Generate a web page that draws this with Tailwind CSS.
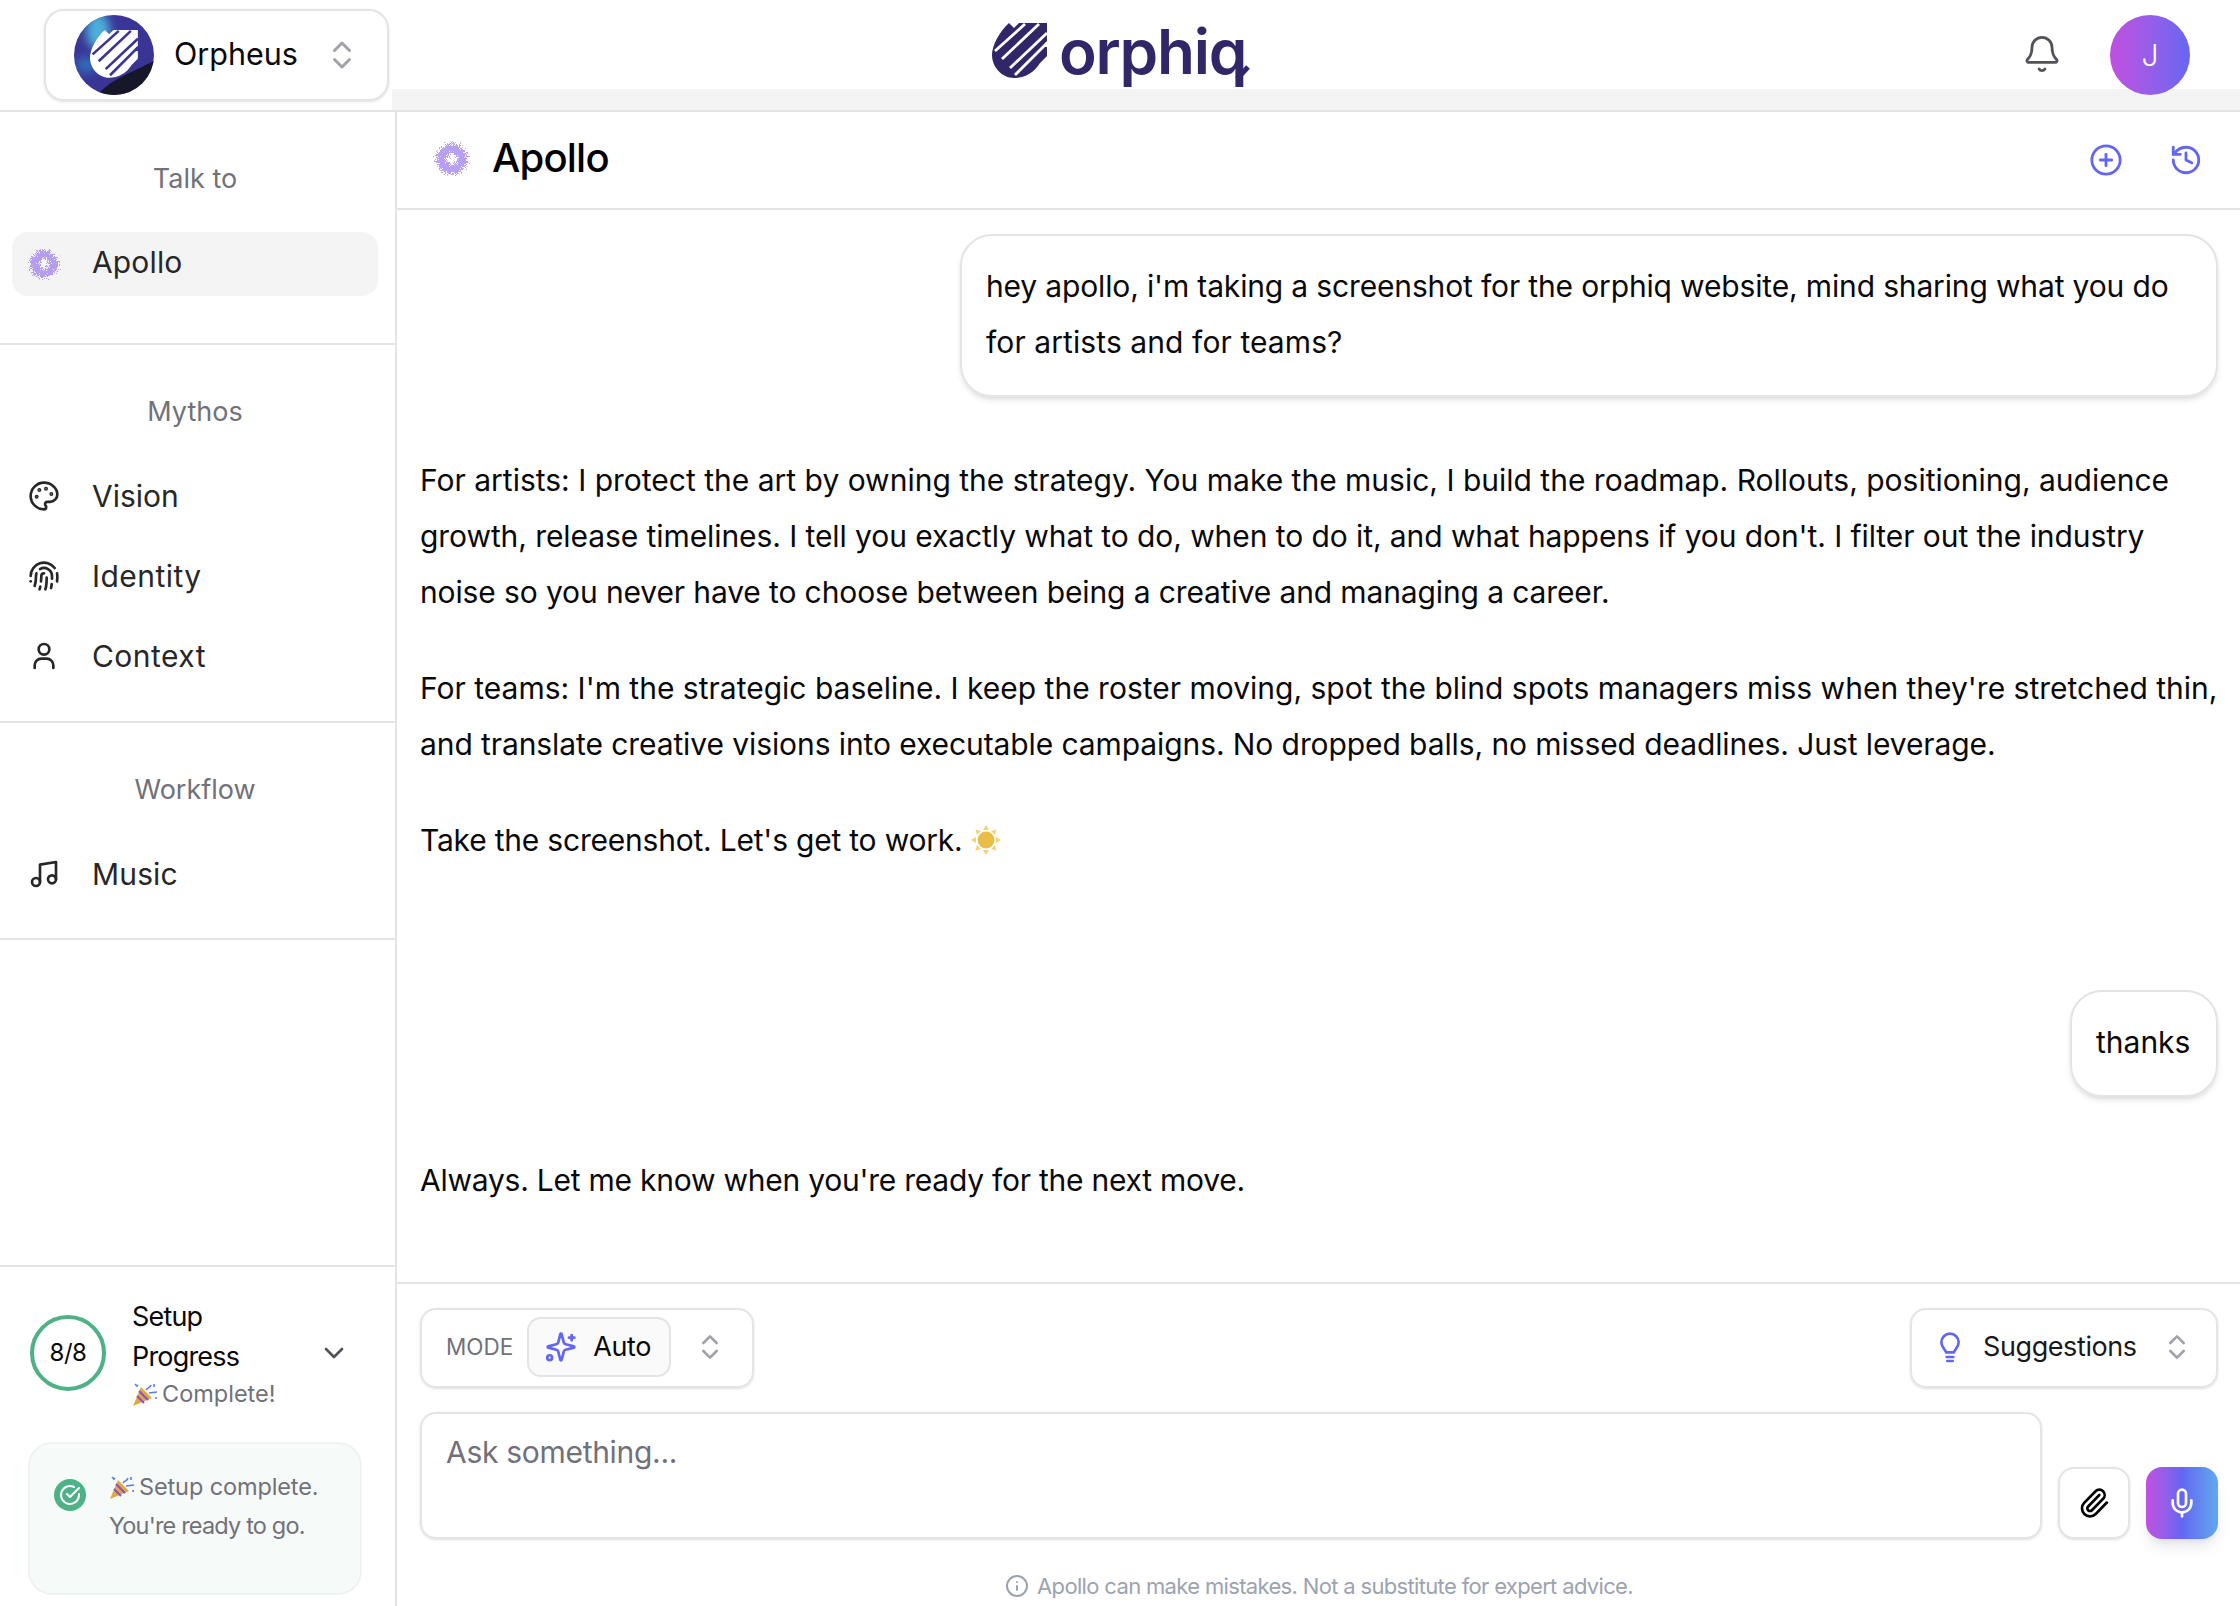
<!doctype html>
<html><head><meta charset="utf-8"><title>Orphiq</title>
<script src="https://cdn.jsdelivr.net/npm/@tailwindcss/browser@4"></script></head>
<body class="bg-white">
<div class="flex h-[1606px] w-[2240px] flex-col overflow-hidden bg-white font-['Inter','Liberation_Sans',sans-serif] text-[30px] text-[#09090b]">
  <!-- top bar -->
  <header class="flex h-[112px] shrink-0 border-b-2 border-[#e4e4e7]">
    <div class="w-[392px] shrink-0 pl-[44px] pt-[9px]">
      <div class="flex h-[92px] w-[345px] items-center rounded-[20px] border-2 border-[#e4e4e7] pl-[28px] shadow-sm">
        <svg class="h-[80px] w-[80px] shrink-0" viewBox="0 0 80 80">
          <defs>
            <clipPath id="avclip"><circle cx="40" cy="40" r="40"/></clipPath>
            <filter id="blurav" x="-50%" y="-50%" width="200%" height="200%"><feGaussianBlur stdDeviation="5"/></filter>
          </defs>
          <g clip-path="url(#avclip)">
            <rect width="80" height="80" fill="#3a3595"/>
            <ellipse cx="24" cy="16" rx="12" ry="18" fill="#4bb0dc" filter="url(#blurav)"/>
            <ellipse cx="12" cy="50" rx="10" ry="8" fill="#2f6fc0" filter="url(#blurav)"/>
            <path d="M24 80C34 66 56 58 80 46V80z" fill="#17172a"/>
          </g>
          <g transform="translate(16 15) scale(.87)">
            <path fill="#fff" d="M17 0l5 5 5-5H55V18L50 24 55 24V33L48 40C42 50 32 55 22 55 10 55 0 44 0 32 0 22 8 8 17 0Z"/>
            <path stroke="#3a3595" stroke-width="3" d="M3 28 33 1M10 36 47 1M18 45 55 10M23 52 55 20"/>
          </g>
        </svg>
        <span class="ml-[20px] mt-[-2px] text-[30.5px] text-[#09090b]">Orpheus</span>
        <svg class="ml-[26px] h-[36px] w-[36px] text-[#a1a1aa]" viewBox="0 0 24 24" fill="none" stroke="currentColor" stroke-width="2" stroke-linecap="round" stroke-linejoin="round"><path d="m7 15 5 5 5-5"/><path d="m7 9 5-5 5 5"/></svg>
      </div>
    </div>
    <div class="flex min-w-0 flex-1 flex-col">
      <div class="relative flex h-[89px] items-start bg-white">
        <div class="ml-[600px] flex items-start pt-[23px]">
          <svg class="h-[55px] w-[55px]" viewBox="0 0 55 55">
            <path fill="#312768" d="M17 0l5 5 5-5H55V18L50 24 55 24V33L48 40C42 50 32 55 22 55 10 55 0 44 0 32 0 22 8 8 17 0Z"/>
            <path stroke="#fff" stroke-width="2.800" d="M3 28 33 1M10 36 47 1M18 45 55 10M23 52 55 20"/>
          </svg>
          <span class="ml-[12px] mt-[-7px] text-[62px] leading-[72px] font-semibold tracking-[-0.02em] text-[#312768]">orphiq</span>
          <svg class="ml-[-16px] mt-[39px] h-[28px] w-[22px]" viewBox="0 0 22 28" fill="none"><path d="M7 17 18 5" stroke="#312768" stroke-width="5"/></svg>
        </div>
        <svg class="ml-auto mr-[48px] mt-[34px] h-[40px] w-[40px] text-[#52525b]" viewBox="0 0 24 24" fill="none" stroke="currentColor" stroke-width="1.7" stroke-linecap="round" stroke-linejoin="round"><path d="M10.268 21a2 2 0 0 0 3.464 0"/><path d="M3.262 15.326A1 1 0 0 0 4 17h16a1 1 0 0 0 .74-1.673C19.41 13.956 18 12.499 18 8A6 6 0 0 0 6 8c0 4.499-1.411 5.956-2.738 7.326"/></svg>
        <div class="relative z-10 mr-[50px] mt-[15px] flex h-[80px] w-[80px] items-center justify-center rounded-full bg-gradient-to-r from-[#c04fe0] to-[#6366f1] text-[30px] font-light text-white">J</div>
      </div>
      <div class="h-[21px] bg-[#f4f4f5]"></div>
    </div>
  </header>

  <div class="flex min-h-0 flex-1">
    <!-- sidebar -->
    <aside class="flex w-[397px] shrink-0 flex-col border-r-2 border-[#e4e4e7] text-[#27272a]">
      <section class="h-[233px] border-b-2 border-[#e4e4e7] pl-[12px] pr-[17px]">
        <h3 class="mt-[49px] text-center text-[27px] leading-[36px] text-[#71717a]">Talk to</h3>
        <div class="mt-[35px] flex h-[64px] w-[366px] items-center rounded-[16px] bg-[#f4f4f5] pl-[10px]">
          <svg class="h-[44px] w-[44px] opacity-75" viewBox="0 0 44 44"><defs><filter id="fz1" x="-60%" y="-60%" width="220%" height="220%" color-interpolation-filters="sRGB"><feTurbulence type="fractalNoise" baseFrequency="1.3" numOctaves="2" seed="4" result="n"/><feDisplacementMap in="SourceGraphic" in2="n" scale="14" xChannelSelector="R" yChannelSelector="G"/></filter></defs><circle cx="22" cy="22" r="9.500" fill="none" stroke="#9f7ff0" stroke-width="9" filter="url(#fz1)"/></svg>
          <span class="ml-[26px] mt-[-4px] tracking-[0.005em]">Apollo</span>
        </div>
      </section>
      <section class="h-[378px] border-b-2 border-[#e4e4e7] pl-[12px] pr-[17px]">
        <h3 class="mt-[49px] text-center text-[27px] leading-[36px] text-[#71717a]">Mythos</h3>
        <div class="mt-[42px] flex flex-col gap-[32px] pl-[16px]">
          <div class="flex h-[48px] items-center"><svg class="h-[32px] w-[32px]" viewBox="0 0 24 24" fill="none" stroke="currentColor" stroke-width="2" stroke-linecap="round" stroke-linejoin="round"><circle cx="13.5" cy="6.5" r=".5" fill="currentColor"/><circle cx="17.5" cy="10.5" r=".5" fill="currentColor"/><circle cx="8.5" cy="7.5" r=".5" fill="currentColor"/><circle cx="6.5" cy="12.5" r=".5" fill="currentColor"/><path d="M12 2C6.5 2 2 6.5 2 12s4.5 10 10 10c.926 0 1.648-.746 1.648-1.688 0-.437-.18-.835-.437-1.125-.29-.289-.438-.652-.438-1.125a1.64 1.64 0 0 1 1.668-1.668h1.996c3.051 0 5.555-2.503 5.555-5.554C21.965 6.012 17.461 2 12 2z"/></svg><span class="ml-[32px]">Vision</span></div>
          <div class="flex h-[48px] items-center"><svg class="h-[32px] w-[32px]" viewBox="0 0 24 24" fill="none" stroke="currentColor" stroke-width="2" stroke-linecap="round" stroke-linejoin="round"><path d="M12 10a2 2 0 0 0-2 2c0 1.02-.1 2.51-.26 4"/><path d="M14 13.12c0 2.38 0 6.38-1 8.88"/><path d="M17.29 21.02c.12-.6.43-2.3.5-3.02"/><path d="M2 12a10 10 0 0 1 18-6"/><path d="M2 16h.01"/><path d="M21.8 16c.2-2 .131-5.354 0-6"/><path d="M5 19.5C5.5 18 6 15 6 12a6 6 0 0 1 .34-2"/><path d="M8.65 22c.21-.66.45-1.32.57-2"/><path d="M9 6.8a6 6 0 0 1 9 5.2v2"/></svg><span class="ml-[32px] tracking-[0.015em]">Identity</span></div>
          <div class="flex h-[48px] items-center"><svg class="h-[32px] w-[32px]" viewBox="0 0 24 24" fill="none" stroke="currentColor" stroke-width="2" stroke-linecap="round" stroke-linejoin="round"><circle cx="12" cy="7" r="4"/><path d="M5 21v-2a5 5 0 0 1 5-5h4a5 5 0 0 1 5 5v2"/></svg><span class="ml-[32px] tracking-[0.015em]">Context</span></div>
        </div>
      </section>
      <section class="h-[217px] border-b-2 border-[#e4e4e7] pl-[12px] pr-[17px]">
        <h3 class="mt-[49px] text-center text-[27px] leading-[36px] text-[#71717a]">Workflow</h3>
        <div class="mt-[42px] flex h-[48px] items-center pl-[16px]"><svg class="h-[32px] w-[32px]" viewBox="0 0 24 24" fill="none" stroke="currentColor" stroke-width="2" stroke-linecap="round" stroke-linejoin="round"><path d="M9 18V5l12-2v13"/><circle cx="6" cy="18" r="3"/><circle cx="18" cy="16" r="3"/></svg><span class="ml-[32px] tracking-[0.005em]">Music</span></div>
      </section>
      <div class="flex-1"></div>
      <section class="h-[341px] border-t-2 border-[#e4e4e7] px-[28px]">
        <div class="mt-[30px] flex h-[112px] items-center pl-[2px]">
          <div class="flex h-[76px] w-[76px] shrink-0 items-center justify-center rounded-full border-[4px] border-[#4fb286] text-[24px] tracking-[-0.02em] text-[#09090b]">8/8</div>
          <div class="ml-[26px] w-[190px]">
            <div class="pt-[1px] text-[27px] leading-[40px] tracking-[-0.03em] text-[#09090b]">Setup<br>Progress</div>
            <div class="flex items-center text-[23.5px] leading-[34px] text-[#71717a]">
              <svg class="mr-[4px] h-[26px] w-[26px] shrink-0" viewBox="0 0 26 26"><path d="M1 25 9 6l11 11z" fill="#e2a93b"/><path d="M5 15l7 7M7 10l9 9" stroke="#8a4fd0" stroke-width="2"/><path d="M14 9c2-3 4-2 5-5M17 12l8-1M3 3l2 2 1-1M22 3v3M24 16v2" stroke="#5b7bea" stroke-width="1.6" fill="none"/></svg>
              <span>Complete!</span>
            </div>
          </div>
          <svg class="ml-[-4px] h-[32px] w-[32px] text-[#52525b]" viewBox="0 0 24 24" fill="none" stroke="currentColor" stroke-width="2" stroke-linecap="round" stroke-linejoin="round"><path d="m6 9 6 6 6-6"/></svg>
        </div>
        <div class="mt-[33px] flex h-[153px] w-[334px] rounded-[24px] border-2 border-[#eef2f0] bg-[#f6faf8] pl-[24px] pt-[23px]">
          <div class="mt-[12px] flex h-[32px] w-[32px] shrink-0 items-center justify-center rounded-full bg-[#4fb286]"><svg class="h-[24px] w-[24px] text-white" viewBox="0 0 24 24" fill="none" stroke="currentColor" stroke-width="2" stroke-linecap="round" stroke-linejoin="round"><path d="M21 11v1a9 9 0 1 1-5-8"/><path d="m9 11 3 3 9-9"/></svg></div>
          <div class="ml-[23px] text-[23.5px] leading-[39px] text-[#71717a]">
            <div class="flex items-center tracking-[-0.005em]"><svg class="mr-[4px] h-[26px] w-[26px] shrink-0" viewBox="0 0 26 26"><path d="M1 25 9 6l11 11z" fill="#e2a93b"/><path d="M5 15l7 7M7 10l9 9" stroke="#8a4fd0" stroke-width="2"/><path d="M14 9c2-3 4-2 5-5M17 12l8-1M3 3l2 2 1-1M22 3v3M24 16v2" stroke="#5b7bea" stroke-width="1.6" fill="none"/></svg><span>Setup complete.</span></div>
            <div class="tracking-[-0.035em]">You're ready to go.</div>
          </div>
        </div>
      </section>
    </aside>

    <!-- main -->
    <main class="flex min-w-0 flex-1 flex-col">
      <div class="flex h-[98px] shrink-0 items-center border-b-2 border-[#e4e4e7] pb-[3px] pl-[31px]">
        <svg class="h-[48px] w-[48px] opacity-75" viewBox="0 0 44 44"><defs><filter id="fz2" x="-60%" y="-60%" width="220%" height="220%" color-interpolation-filters="sRGB"><feTurbulence type="fractalNoise" baseFrequency="1.3" numOctaves="2" seed="8" result="n"/><feDisplacementMap in="SourceGraphic" in2="n" scale="14" xChannelSelector="R" yChannelSelector="G"/></filter></defs><circle cx="22" cy="22" r="9.500" fill="none" stroke="#9f7ff0" stroke-width="9" filter="url(#fz2)"/></svg>
        <span class="ml-[16px] mt-[-2px] text-[40px] font-medium tracking-[-0.02em] text-black">Apollo</span>
        <svg class="ml-auto mt-[3px] h-[34px] w-[34px] text-[#6366f1]" viewBox="0 0 24 24" fill="none" stroke="currentColor" stroke-width="2" stroke-linecap="round" stroke-linejoin="round"><circle cx="12" cy="12" r="10"/><path d="M8 12h8"/><path d="M12 8v8"/></svg>
        <svg class="ml-[46px] mr-[37px] mt-[3px] h-[34px] w-[34px] text-[#6366f1]" viewBox="0 0 24 24" fill="none" stroke="currentColor" stroke-width="2" stroke-linecap="round" stroke-linejoin="round"><path d="M3 12a9 9 0 1 0 9-9 9.75 9.75 0 0 0-6.74 2.74L3 8"/><path d="M3 3v5h5"/><path d="M12 7v5l4 2"/></svg>
      </div>

      <div class="min-h-0 flex-1 overflow-hidden pl-[23px] pr-[22px] pt-[24px] leading-[56px] text-[#09090b]">
        <div class="ml-auto w-[1258px] rounded-[32px] border-2 border-[#e4e4e7] px-[24px] pb-[25px] pt-[22px] whitespace-nowrap tracking-[-0.005em] shadow-md">hey apollo, i'm taking a screenshot for the orphiq website, mind sharing what you do<br><span class="tracking-[0.003em]">for artists and for teams?</span></div>
        <p class="mt-[55px] whitespace-nowrap">For artists: I protect the art by owning the strategy. You make the music, I build the roadmap. Rollouts, positioning, audience<br><span class="tracking-[-0.0026em]">growth, release timelines. I tell you exactly what to do, when to do it, and what happens if you don't. I filter out the industry</span><br><span class="tracking-[-0.004em]">noise so you never have to choose between being a creative and managing a career.</span></p>
        <p class="mt-[40px] whitespace-nowrap">For teams: I'm the strategic baseline. I keep the roster moving, spot the blind spots managers miss when they're stretched thin,<br><span class="tracking-[-0.003em]">and translate creative visions into executable campaigns. No dropped balls, no missed deadlines. Just leverage.</span></p>
        <p class="mt-[40px] flex items-center whitespace-nowrap tracking-[-0.007em]">Take the screenshot. Let's get to work.<svg class="ml-[8px] h-[32px] w-[32px]" viewBox="0 0 32 32"><g fill="#f3d27a"><path d="M16 1l3 5h-6zM16 31l-3-5h6zM1 16l5-3v6zM31 16l-5 3v-6zM5.5 5.5l5.5 1.5-4 4zM26.500 26.500l-5.500-1.500 4-4zM26.500 5.500l-1.500 5.500-4-4zM5.500 26.500l1.500-5.500 4 4z"/></g><circle cx="16" cy="16" r="8.500" fill="#e8bd4a"/></svg></p>
        <div class="ml-auto mt-[122px] w-[148px] rounded-[32px] border-2 border-[#e4e4e7] px-[24px] pb-[25px] pt-[22px] whitespace-nowrap shadow-md">thanks</div>
        <p class="mt-[55px] whitespace-nowrap tracking-[-0.008em]">Always. Let me know when you're ready for the next move.</p>
      </div>

      <div class="h-[324px] shrink-0 border-t-2 border-[#e4e4e7] pl-[23px] pr-[22px] pt-[24px]">
        <div class="flex items-start justify-between">
          <div class="flex h-[80px] w-[334px] items-center rounded-[16px] border-2 border-[#e4e4e7] pl-[24px] pb-[2px] shadow-sm">
            <span class="text-[22.5px] text-[#71717a]">MODE</span>
            <div class="ml-[14px] flex h-[60px] w-[144px] items-center rounded-[14px] border-2 border-[#e4e4e7] bg-[#fafafa] pl-[16px]">
              <svg class="h-[32px] w-[32px] text-[#6366f1]" viewBox="0 0 24 24" fill="none" stroke="currentColor" stroke-width="2" stroke-linecap="round" stroke-linejoin="round"><path d="M9.937 15.5A2 2 0 0 0 8.5 14.063l-6.135-1.582a.5.5 0 0 1 0-.962L8.500 9.936A2 2 0 0 0 9.937 8.500l1.582-6.135a.5.5 0 0 1 .963 0L14.063 8.500A2 2 0 0 0 15.500 9.937l6.135 1.581a.5.5 0 0 1 0 .964L15.500 14.063a2 2 0 0 0-1.437 1.437l-1.582 6.135a.5.5 0 0 1-.963 0z"/><path d="M20 3v4"/><path d="M22 5h-4"/><circle cx="3.500" cy="20" r="1.800"/></svg>
              <span class="ml-[16px] text-[27px] tracking-[-0.015em]">Auto</span>
            </div>
            <svg class="ml-[23px] h-[32px] w-[32px] text-[#a1a1aa]" viewBox="0 0 24 24" fill="none" stroke="currentColor" stroke-width="2" stroke-linecap="round" stroke-linejoin="round"><path d="m7 15 5 5 5-5"/><path d="m7 9 5-5 5 5"/></svg>
          </div>
          <div class="flex h-[80px] w-[308px] items-center rounded-[16px] border-2 border-[#e4e4e7] pl-[22px] pb-[2px] shadow-sm">
            <svg class="h-[32px] w-[32px] text-[#6366f1]" viewBox="0 0 24 24" fill="none" stroke="currentColor" stroke-width="2" stroke-linecap="round" stroke-linejoin="round"><path d="M9 16c0-1.800-3.500-3.500-3.500-7.500a6.500 6.500 0 0 1 13 0c0 4-3.500 5.700-3.500 7.500z"/><path d="M9.500 19.500h5"/><path d="M10 22.500h4"/></svg>
            <span class="ml-[17px] text-[27px] tracking-[-0.015em] text-[#18181b]">Suggestions</span>
            <svg class="ml-[24px] h-[32px] w-[32px] text-[#a1a1aa]" viewBox="0 0 24 24" fill="none" stroke="currentColor" stroke-width="2" stroke-linecap="round" stroke-linejoin="round"><path d="m7 15 5 5 5-5"/><path d="m7 9 5-5 5 5"/></svg>
          </div>
        </div>
        <div class="mt-[24px] flex items-end">
          <div class="h-[127px] w-[1622px] rounded-[16px] border-2 border-[#e4e4e7] px-[24px] pt-[18px] text-[#71717a] tracking-[-0.01em] shadow-sm leading-[40px]">Ask something...</div>
          <div class="ml-[16px] flex h-[72px] w-[72px] items-center justify-center rounded-[16px] border-2 border-[#e4e4e7] shadow-sm"><svg class="h-[32px] w-[32px] text-black" viewBox="0 0 24 24" fill="none" stroke="currentColor" stroke-width="2" stroke-linecap="round" stroke-linejoin="round"><path d="m16 6-8.414 8.586a2 2 0 0 0 2.829 2.829l8.414-8.586a4 4 0 1 0-5.657-5.657l-8.379 8.551a6 6 0 1 0 8.485 8.485l8.379-8.551"/></svg></div>
          <div class="ml-[16px] flex h-[72px] w-[72px] items-center justify-center rounded-[16px] bg-gradient-to-r from-[#c04fe0] via-[#6366f1] to-[#60a8ec] shadow-lg"><svg class="h-[32px] w-[32px] text-white" viewBox="0 0 24 24" fill="none" stroke="currentColor" stroke-width="2" stroke-linecap="round" stroke-linejoin="round"><path d="M12 2a3 3 0 0 0-3 3v7a3 3 0 0 0 6 0V5a3 3 0 0 0-3-3Z"/><path d="M19 10v2a7 7 0 0 1-14 0v-2"/><path d="M12 19v3"/></svg></div>
        </div>
        <div class="mt-[31px] flex items-center justify-center text-[22px] leading-[32px] tracking-[-0.03em] text-[#9ca3af]"><svg class="mr-[8px] h-[24px] w-[24px]" viewBox="0 0 24 24" fill="none" stroke="currentColor" stroke-width="2" stroke-linecap="round" stroke-linejoin="round"><circle cx="12" cy="12" r="10"/><path d="M12 16v-4"/><path d="M12 8h.01"/></svg>Apollo can make mistakes. Not a substitute for expert advice.</div>
      </div>
    </main>
  </div>
</div>
</body></html>
